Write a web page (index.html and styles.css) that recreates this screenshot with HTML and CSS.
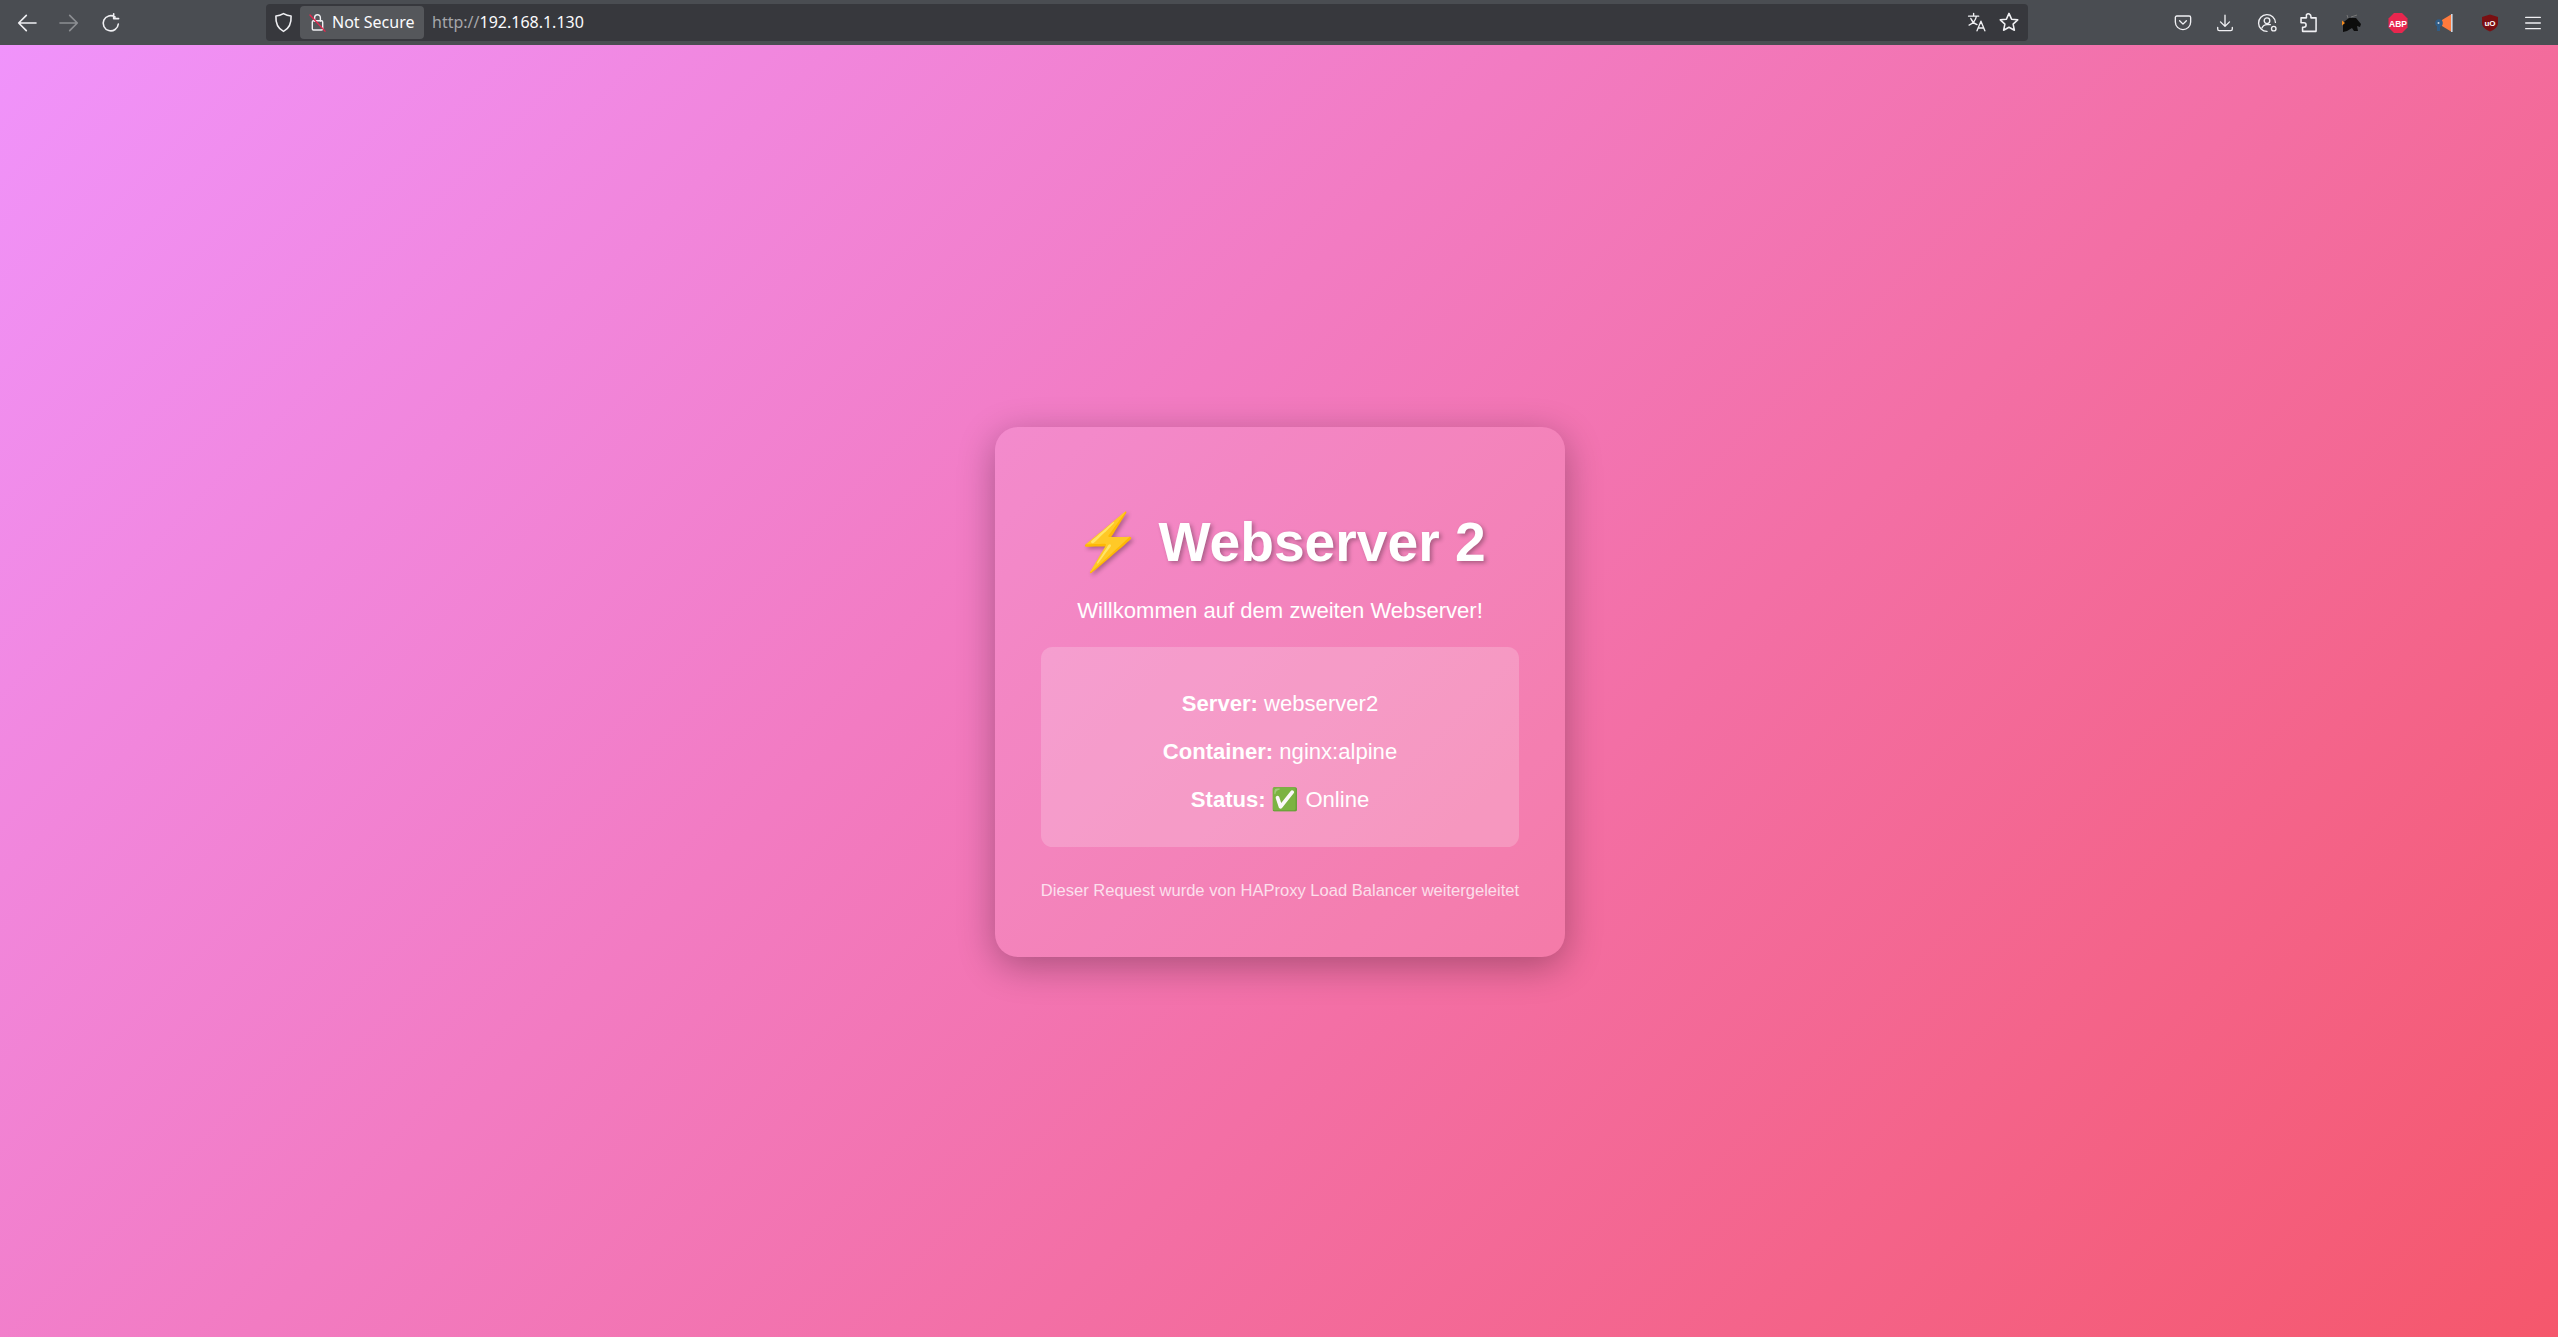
FILE: index.html
```html
<!DOCTYPE html>
<html lang="de">
<head>
<meta charset="utf-8">
<title>Webserver 2</title>
<link rel="stylesheet" href="styles.css">
</head>
<body>
<header class="toolbar">
  <nav class="nav">
    <svg class="ic" viewBox="1.500 1.500 13 13"><path d="M14.500 8H2M7.500 2.500 2 8l5.500 5.500"/></svg>
    <svg class="ic dim" viewBox="1.500 1.500 13 13"><path d="M1.500 8H14M8.500 2.500 14 8l-5.500 5.500"/></svg>
    <svg class="ic" viewBox="1.500 1 13 13.500"><path d="M13.500 8.500A5.700 5.700 0 1 1 11 3.200M10 .8v3.700h3.700"/></svg>
  </nav>
  <div class="urlbar">
    <svg class="ic shield" viewBox="1.500 .8 13 14.400"><path d="M8 1.200c2 1.200 3.800 1.700 5.800 1.800.3 5.500-1.700 9.700-5.800 11.800C3.900 12.700 1.900 8.500 2.200 3 4.200 2.900 6 2.400 8 1.200z"/></svg>
    <div class="chip">
      <svg class="ic lock" viewBox="1.500 0 13 16"><path d="M5.500 7V3.800a2.500 2.500 0 0 1 5 0V7M3.500 7.500a1 1 0 0 1 1-1h7a1 1 0 0 1 1 1v6a1 1 0 0 1-1 1h-7a1 1 0 0 1-1-1z"/><path class="slash" d="M1.500 1.500l13 14"/></svg>
      <span>Not Secure</span>
    </div>
    <div class="url"><span class="proto">http://</span>192.168.1.130</div>
    <svg class="ic translate" viewBox="1 .7 15 16"><path d="M1 3.500h9M5.500 1v2.500M8 3.500c-.8 4-3 6.500-6.500 8M3 5.500c1 2.500 3 4.500 5.500 5.500M8.500 16.500 12 8l3.500 8.500M9.700 14h4.600"/></svg>
    <svg class="ic star" viewBox="1 1 14 14"><path d="M8 1.300l2 4.500 4.800.5-3.600 3.300 1 4.800L8 12.100l-4.200 2.300 1-4.800L1.200 6.300 6 5.800z"/></svg>
  </div>
  <div class="tools">
    <svg class="ic" viewBox="0 0 16 16"><path d="M2.500 1.800h11a1.300 1.300 0 0 1 1.300 1.300v4a6.800 6.800 0 0 1-13.600 0v-4a1.300 1.300 0 0 1 1.300-1.300zM5 6l3 3 3-3"/></svg>
    <svg class="ic" viewBox="0 0 16 16"><path d="M8 1v9.500M4 7l4 4 4-4M1.500 12v1.300a1.500 1.500 0 0 0 1.500 1.500h10a1.500 1.500 0 0 0 1.500-1.500V12"/></svg>
    <svg class="ic" viewBox="1 1 16 16"><path d="M9 16.500A7.500 7.500 0 1 1 16.500 8.500"/><circle cx="9" cy="7" r="2.500"/><path d="M4.500 13.500c1-2.500 3-3 4.500-3h3"/><circle class="ring" cx="15" cy="14" r="2"/></svg>
    <svg class="ic" viewBox="1.500 1 13 14"><path d="M6 1.500a2 2 0 0 1 3.500 1.300V4h4v10.500H3v-3.200h1a1.700 1.700 0 0 0 0-3.500H1.800V4h4.200V2.800z"/></svg>
    <svg class="ext tight" viewBox="0 0 22 20"><path fill="#0d0d0d" d="M2 19V9.500L8 5h7l5 6-1 3-3-1 1 5h-4l-2-3-5 3z"/><path fill="#f28a1e" d="M1 7.500 4 10l-3 2.500z"/><path fill="none" stroke="#777" d="M7 5 6 2M10 4l6-2"/></svg>
    <svg class="ext" viewBox="0 0 22 20"><path fill="#e8264e" d="M7 0h8l5.500 5.500v9L15 20H7l-5.500-5.500v-9z"/><text x="11" y="13.500" class="abp">ABP</text></svg>
    <svg class="ext" viewBox="0 0 22 20"><path fill="#ff7a3d" d="M9 7l9-5.500v17L9 13z"/><rect x="18" y="1" width="1.600" height="18" fill="#cfd6e0"/><circle cx="6" cy="10" r="3.800" fill="#2f5c86"/><path fill="#2f5c86" d="M4 13h3v5H4z"/><circle cx="5.500" cy="10" r="1" fill="#cfd6e0"/></svg>
    <svg class="ext" viewBox="0 0 22 20"><path fill="#7a0f12" d="M11 1.500l8 2.500v6c0 4-3.500 6.500-8 8.500-4.500-2-8-4.500-8-8.500V4z"/><text x="11" y="12.500" class="ub">uO</text></svg>
    <svg class="ic tight" viewBox="0 0 16 16"><path d="M1.500 3h13M1.500 8h13M1.500 13h13"/></svg>
  </div>
</header>
<main class="page">
  <section class="card">
    <h1 class="title">⚡ Webserver 2</h1>
    <p class="lead">Willkommen auf dem zweiten Webserver!</p>
    <div class="info">
      <p><strong>Server:</strong> webserver2</p>
      <p><strong>Container:</strong> nginx:alpine</p>
      <p><strong>Status:</strong> ✅ Online</p>
    </div>
    <p class="note">Dieser Request wurde von HAProxy Load Balancer weitergeleitet</p>
  </section>
</main>
</body>
</html>
```
FILE: styles.css
```css
* { box-sizing: border-box; }
html, body { margin: 0; height: 100%; }
body { display: flex; flex-direction: column; font-family: "Liberation Sans", "Noto Color Emoji", sans-serif; overflow: hidden; }

.toolbar { flex: 0 0 45px; height: 45px; background: #4a4d52; display: flex; align-items: center; font-family: "Noto Sans", sans-serif; color: #fbfbfe; }
.ic { width: 18px; height: 18px; fill: none; stroke: #f0f0f3; stroke-width: 1.200; stroke-linecap: round; stroke-linejoin: round; flex: none; overflow: visible; }
.dim { opacity: .4; }
.nav { display: flex; gap: 24px; width: 266px; padding-left: 18px; }

.urlbar { width: 1762px; height: 37px; background: #37383d; border-radius: 4px; display: flex; align-items: center; padding: 0 10px 0 8px; margin-top: -1px; }
.shield { width: 17px; height: 19px; margin-left: 1px; }
.chip { margin-left: 8px; height: 33px; width: 124px; background: #55575b; border-radius: 4px; display: flex; align-items: center; gap: 7px; padding-left: 10px; font-size: 16px; }
.lock { width: 15px; height: 19px; }
.slash { stroke: #e8264e; }
.url { margin-left: 8px; font-size: 16px; flex: 1; }
.proto { color: #a5a6aa; }
.translate { margin-right: 14px; }
.tools { flex: 1; display: flex; align-items: center; gap: 24px; padding-left: 146px; }
.tight { margin-left: -1px; }
.ext { width: 22px; height: 20px; flex: none; }
.abp { font: bold 8.500px "Liberation Sans", sans-serif; fill: #fff; text-anchor: middle; }
.ub { font: bold 8px "Liberation Sans", sans-serif; fill: #fff; text-anchor: middle; }

.page { flex: 1; display: flex; align-items: center; justify-content: center; padding: 2px 0 0 2px; background: linear-gradient(135deg, #f093fb 0%, #f5576c 100%); color: #fff; }
.card { background: rgba(255,255,255,.1); border-radius: 23px; padding: 46px; text-align: center; box-shadow: 0 9px 37px rgba(0,0,0,.3); }
.title { margin: 37px 0 24px; font-size: 55.200px; font-weight: bold; text-shadow: 2.300px 2.300px 4.600px rgba(0,0,0,.3); }
.lead { margin: 0 0 23px; font-size: 22.080px; }
.info { background: rgba(255,255,255,.2); border-radius: 11.500px; padding: 21.500px 18px 12.500px; font-size: 22.080px; }
.info p { margin: 22px 0; }
.note { margin: 34px 0 9.500px; font-size: 16.560px; opacity: .75; }
```
